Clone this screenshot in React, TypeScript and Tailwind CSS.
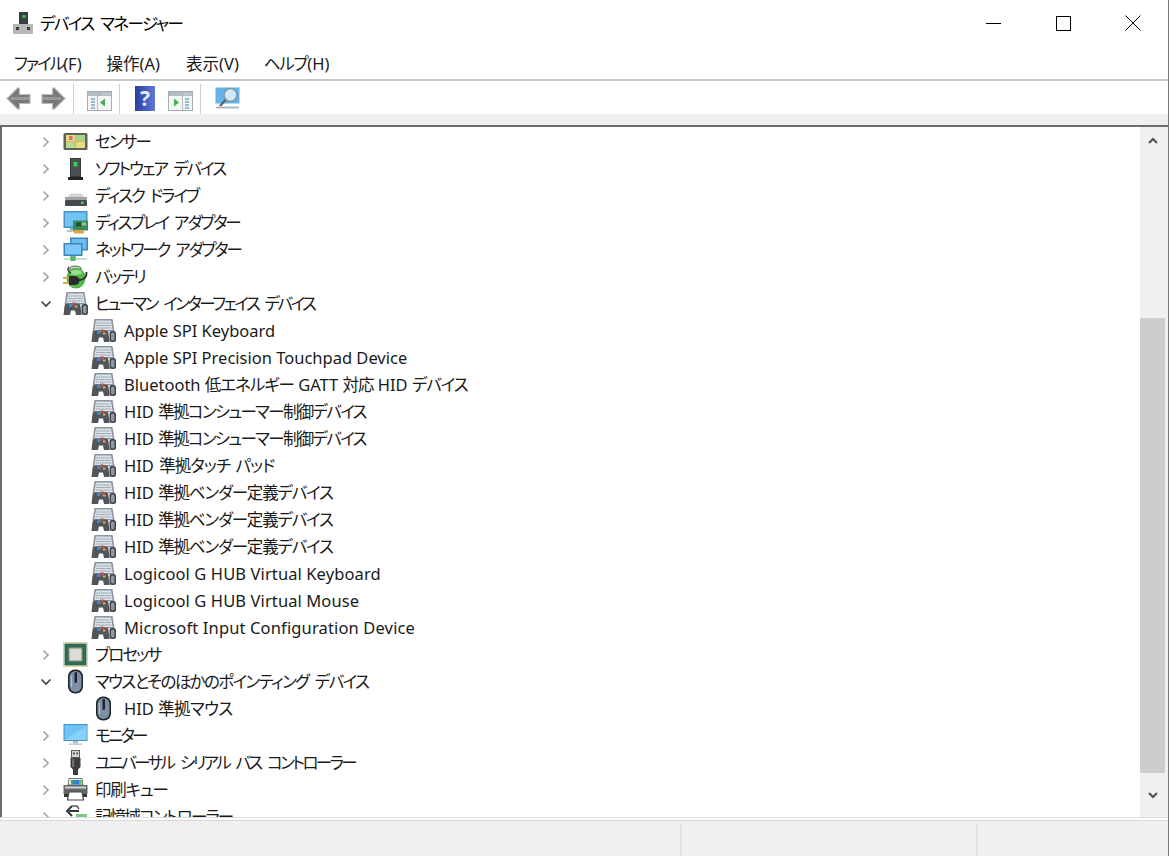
import React from 'react';

const font = { fontFamily: '"Noto Sans", "Noto Sans CJK JP", sans-serif' };

type IconKind =
  | 'sensor'
  | 'software'
  | 'disk'
  | 'display'
  | 'network'
  | 'battery'
  | 'hid'
  | 'cpu'
  | 'mouse'
  | 'monitor'
  | 'usb'
  | 'printer'
  | 'storage';

interface Row {
  label: string;
  icon: IconKind;
  depth: number;
  open?: boolean;
  // letter spacing for the Japanese runs / for the whole label
  kana?: string;
  latin?: string;
}

const rows: Row[] = [
  { label: 'センサー', icon: 'sensor', depth: 0, kana: 'tracking-[-1.75px]' },
  { label: 'ソフトウェア デバイス', icon: 'software', depth: 0, latin: '[word-spacing:2px]', kana: 'tracking-[-2px]' },
  { label: 'ディスク ドライブ', icon: 'disk', depth: 0, latin: '[word-spacing:2px]', kana: 'tracking-[-2px]' },
  { label: 'ディスプレイ アダプター', icon: 'display', depth: 0, latin: '[word-spacing:2px]', kana: 'tracking-[-2.2px]' },
  { label: 'ネットワーク アダプター', icon: 'network', depth: 0, latin: '[word-spacing:2px]', kana: 'tracking-[-2.2px]' },
  { label: 'バッテリ', icon: 'battery', depth: 0, kana: 'tracking-[-1.75px]' },
  { label: 'ヒューマン インターフェイス デバイス', icon: 'hid', depth: 0, open: true, latin: '[word-spacing:2px]', kana: 'tracking-[-2.5px]' },
  { label: 'Apple SPI Keyboard', icon: 'hid', depth: 1 },
  { label: 'Apple SPI Precision Touchpad Device', icon: 'hid', depth: 1 },
  { label: 'Bluetooth 低エネルギー GATT 対応 HID デバイス', icon: 'hid', depth: 1, kana: 'tracking-[-1.05px]' },
  { label: 'HID 準拠コンシューマー制御デバイス', icon: 'hid', depth: 1, kana: 'tracking-[-1.67px]' },
  { label: 'HID 準拠コンシューマー制御デバイス', icon: 'hid', depth: 1, kana: 'tracking-[-1.67px]' },
  { label: 'HID 準拠タッチ パッド', icon: 'hid', depth: 1, latin: '[word-spacing:1px]', kana: 'tracking-[-0.9px]' },
  { label: 'HID 準拠ベンダー定義デバイス', icon: 'hid', depth: 1, kana: 'tracking-[-1.18px]' },
  { label: 'HID 準拠ベンダー定義デバイス', icon: 'hid', depth: 1, kana: 'tracking-[-1.18px]' },
  { label: 'HID 準拠ベンダー定義デバイス', icon: 'hid', depth: 1, kana: 'tracking-[-1.18px]' },
  { label: 'Logicool G HUB Virtual Keyboard', icon: 'hid', depth: 1, latin: 'tracking-[0.1px]' },
  { label: 'Logicool G HUB Virtual Mouse', icon: 'hid', depth: 1, latin: 'tracking-[0.1px]' },
  { label: 'Microsoft Input Configuration Device', icon: 'hid', depth: 1, latin: 'tracking-[0.14px]' },
  { label: 'プロセッサ', icon: 'cpu', depth: 0, kana: 'tracking-[-2px]' },
  { label: 'マウスとそのほかのポインティング デバイス', icon: 'mouse', depth: 0, open: true, latin: '[word-spacing:2px]', kana: 'tracking-[-1.6px]' },
  { label: 'HID 準拠マウス', icon: 'mouse', depth: 1, kana: 'tracking-[-0.6px]' },
  { label: 'モニター', icon: 'monitor', depth: 0, kana: 'tracking-[-2.7px]' },
  { label: 'ユニバーサル シリアル バス コントローラー', icon: 'usb', depth: 0, latin: '[word-spacing:2px]', kana: 'tracking-[-2.55px]' },
  { label: '印刷キュー', icon: 'printer', depth: 0, kana: 'tracking-[-1.2px]' },
  { label: '記憶域コントローラー', icon: 'storage', depth: 0, kana: 'tracking-[-1.8px]' },
];

const DeviceIcon: React.FC<{ kind: IconKind }> = ({ kind }) => {
  const body = () => {
    switch (kind) {
      case 'sensor':
        return (
          <>
            <rect x="0.5" y="4" width="24" height="17" rx="1.5" fill="#5f605a" />
            <rect x="3" y="6" width="19" height="13" fill="#e3df86" />
            <rect x="13" y="6" width="9" height="6" fill="#a6d58e" />
            <rect x="3" y="13" width="9" height="6" fill="#b6db90" />
            <path d="M3 12.5h19M12.5 6v13" stroke="#efa95a" strokeWidth="1.2" />
            <rect x="6" y="7" width="3.5" height="4" fill="#e7686b" />
          </>
        );
      case 'software':
        return (
          <>
            <path d="M7 2h11v19H7z" fill="#34383b" />
            <rect x="8" y="3" width="9" height="17" fill="#4a5054" />
            <rect x="10.5" y="6" width="4" height="4.5" fill="#2fd44b" />
            <path d="M5 21h15v3H5z" fill="#232527" />
          </>
        );
      case 'disk':
        return (
          <>
            <path d="M5 14c1-2.5 2.5-3.5 5-3.5h6c2.5 0 4 1 5 3.5z" fill="#d2d5d8" />
            <rect x="2" y="14" width="22" height="3" fill="#a2a5a8" />
            <rect x="2" y="17" width="22" height="6" rx="1" fill="#45494c" />
            <rect x="18" y="18.5" width="2.5" height="2.5" fill="#3ad64e" />
          </>
        );
      case 'display':
        return (
          <>
            <rect x="0.5" y="1" width="24" height="17" fill="#4b8fc5" />
            <rect x="2" y="2.5" width="21" height="14" fill="#6ec4f3" />
            <path d="M7 18h10v2H7z" fill="#93a9b8" />
            <path d="M4 20h13v2H4z" fill="#b9c6cf" />
            <rect x="10" y="10.5" width="15" height="10" fill="#3b8b5d" />
            <rect x="13" y="12.5" width="5" height="4" fill="#1f4d36" />
            <rect x="19" y="12.5" width="4" height="3" fill="#99c894" />
            <rect x="11" y="20.5" width="10" height="3" fill="#e4a62e" />
          </>
        );
      case 'network':
        return (
          <>
            <rect x="7" y="0.5" width="18" height="13" fill="#3f83bd" />
            <rect x="8.5" y="2" width="15" height="10" fill="#6cbdf0" />
            <rect x="0.5" y="6" width="19" height="13" fill="#3f83bd" />
            <rect x="2" y="7.5" width="16" height="10" fill="#7bcaf6" />
            <path d="M7 19h6v2H7z" fill="#8fa8b4" />
            <rect x="1" y="21" width="23" height="2" fill="#bfe0c2" />
            <rect x="7.5" y="20" width="5" height="4" fill="#4fbb5c" />
          </>
        );
      case 'battery':
        return (
          <>
            <path d="M7 4c0-2 9-3 11 0v5H7z" fill="#e2e4de" stroke="#4f5150" strokeWidth="1" />
            <ellipse cx="13" cy="14" rx="9.5" ry="10.5" fill="#55b64a" />
            <ellipse cx="13" cy="8.5" rx="6" ry="2.4" fill="#9be08a" />
            <path d="M0 14h7" stroke="#c9a93e" strokeWidth="1.8" />
            <path d="M0 19h7" stroke="#c9a93e" strokeWidth="1.8" />
            <path d="M6 12h5c3.5 0 5.5 1.500 5.5 4.500S14.500 21 11 21H6z" fill="#2a2c2d" />
            <path d="M16 16c5 0 8-3 7.500-8" stroke="#2a2c2d" strokeWidth="1.8" fill="none" />
            <path d="M6 3C4 5 5 8 8 9" stroke="#2a2c2d" strokeWidth="1.4" fill="none" />
          </>
        );
      case 'hid':
        return (
          <>
            <path d="M3.500 1h18l2 12.500h-22z" fill="#8a96a2" />
            <path d="M5 2.500h15l1.700 9.500H3.300z" fill="#dbe2e8" />
            <path d="M5.500 5h14M5 7.500h15M4.500 10h16" stroke="#8f9ba7" strokeWidth="1.2" strokeDasharray="1.6 0.6" />
            <path d="M0.500 24l1-9c.5-2 1.500-2.500 4.500-2.500h8c2 0 3 .5 3.500 2.500l1 9H13l-1-4.500H8L7 24z" fill="#50565b" />
            <rect x="6" y="12.500" width="3.500" height="3.500" fill="#3a86da" />
            <rect x="9.500" y="11.500" width="3" height="3" fill="#d3492d" />
            <rect x="12" y="14.500" width="2.500" height="2" fill="#e2b23a" />
            <rect x="18.500" y="13" width="6.500" height="11" rx="2.500" fill="#3f4448" />
            <rect x="20" y="14.500" width="3.500" height="8" rx="1.500" fill="#8f99a2" />
          </>
        );
      case 'cpu':
        return (
          <>
            <rect x="0.5" y="0.5" width="24" height="24" fill="none" stroke="#cfa63a" strokeWidth="1" strokeDasharray="1 1" />
            <rect x="1.5" y="1.5" width="22" height="22" fill="#2f6b4c" />
            <rect x="6" y="6" width="13" height="13" fill="#dcdcd9" stroke="#8a8f8b" strokeWidth="1.2" />
          </>
        );
      case 'mouse':
        return (
          <>
            <rect x="5" y="0.5" width="15" height="24" rx="7" fill="#1e2226" />
            <rect x="6.5" y="2" width="12" height="21" rx="6" fill="#7d90a7" />
            <path d="M8.500 7v11" stroke="#b3c0ce" strokeWidth="1.2" />
            <rect x="11.5" y="3" width="2.5" height="11" rx="1.2" fill="#20242a" />
          </>
        );
      case 'monitor':
        return (
          <>
            <rect x="0.5" y="1" width="24" height="17" fill="#4c8dc2" />
            <rect x="1.5" y="2" width="22" height="15" fill="#6cc4f6" />
            <path d="M1.500 17L23.500 3v14z" fill="#86d2f9" />
            <path d="M10 18h5v2.500h-5z" fill="#a9bdca" />
            <path d="M6 20.500h13v1.500H6z" fill="#c3d0d9" />
          </>
        );
      case 'usb':
        return (
          <>
            <rect x="8.5" y="0.5" width="8" height="7" fill="#d0d3d5" stroke="#5e6163" strokeWidth="1" />
            <rect x="10" y="2.5" width="1.8" height="1.8" fill="#4a4d4f" />
            <rect x="13.3" y="2.5" width="1.8" height="1.8" fill="#4a4d4f" />
            <path d="M7.500 8h10v9l-2.500 2.500V25h-5v-5.500L7.500 17z" fill="#3c3f41" />
            <rect x="9" y="9" width="2.2" height="8" fill="#6c7072" />
          </>
        );
      case 'printer':
        return (
          <>
            <path d="M6 1.500h13l1 6.500H5z" fill="#e8ecec" stroke="#55595c" strokeWidth="0.8" />
            <path d="M8 3h3v4.500H8z" fill="#2fae4b" />
            <path d="M11 3h5v4.500h-5z" fill="#2f7fdb" />
            <path d="M16 3h2.500v4.500H16z" fill="#4cc15d" />
            <rect x="0.5" y="8" width="24" height="9" fill="#63676a" />
            <rect x="2" y="9.5" width="21" height="2" fill="#d2d5d7" />
            <path d="M6 15h13l1.500 8h-16z" fill="#fff" stroke="#45484b" strokeWidth="1.2" />
            <rect x="1" y="17" width="4" height="3" fill="#35383a" />
            <rect x="20" y="17" width="4" height="3" fill="#35383a" />
          </>
        );
      case 'storage':
        return (
          <>
            <path d="M9 2l-5 5 5 5M6 7h10" fill="none" stroke="#33373a" strokeWidth="2" />
            <path d="M9 2h5l2 3" fill="none" stroke="#5a5e61" strokeWidth="1.5" />
            <rect x="13" y="10" width="11" height="5" fill="#7cc48a" />
            <rect x="3" y="14" width="21" height="7" fill="#6b6f72" />
          </>
        );
    }
  };
  return (
    <svg width="25" height="25" viewBox="0 0 25 25" className="shrink-0">
      {body()}
    </svg>
  );
};

// Japanese runs get their own spacing, the Latin runs stay as they are
const Label: React.FC<{ row: Row }> = ({ row }) => (
  <span
    className={`whitespace-nowrap pt-[2px] text-[16.5px] text-[#1a1a1a] ${row.latin ?? ''} ${row.depth === 1 ? 'ml-[8px]' : 'ml-[7px]'}`}
  >
    {row.label.split(/([\x20-\x7e]+)/).map((run, i) =>
      /^[\x20-\x7e]*$/.test(run) ? run : (
        <span key={i} className={row.kana}>
          {run}
        </span>
      ),
    )}
  </span>
);

const TreeRow: React.FC<{ row: Row }> = ({ row }) => (
  <div className={`flex h-[27px] shrink-0 items-center ${row.depth === 1 ? 'pl-[89px]' : 'pl-[38px]'}`}>
    {row.depth === 0 && (
      <svg width="12" height="12" viewBox="0 0 12 12" className="mr-[11px] shrink-0">
        {row.open ? (
          <path d="M1.5 3.5L6 8l4.500-4.500" fill="none" stroke="#404040" strokeWidth="1.7" />
        ) : (
          <path d="M3.5 1.5L8 6l-4.500 4.500" fill="none" stroke="#a6a6a6" strokeWidth="1.7" />
        )}
      </svg>
    )}
    <DeviceIcon kind={row.icon} />
    <Label row={row} />
  </div>
);

const Separator = () => <div className="h-[30px] w-px shrink-0 bg-[#d0d0d0]" />;

const Arrow: React.FC<{ flip?: boolean }> = ({ flip }) => (
  <svg width="25" height="25" viewBox="0 0 25 25" className={`shrink-0 ${flip ? '-scale-x-100' : ''}`}>
    <path d="M1 12.5L11.500 2h2v6.500H24v9H13.500V23h-2z" fill="#787a7a" stroke="#bcbdbd" strokeWidth="1.2" />
    <path d="M5 12.5h18" stroke="#979898" strokeWidth="3" />
  </svg>
);

const PaneIcon: React.FC<{ dir: 'left' | 'right' }> = ({ dir }) => (
  <svg width="25" height="25" viewBox="0 0 25 25" className="shrink-0">
    <rect x="0.5" y="5.5" width="24" height="19" fill="#f3f5f6" stroke="#a6adb3" />
    <rect x="1" y="6" width="23" height="4" fill="#b4bcc3" />
    <path d="M16 8h1.500M19 8h1.500M22 8h1" stroke="#f0f1f2" strokeWidth="1.2" />
    {dir === 'left' ? (
      <>
        <path d="M4 13h4M4 16h4M4 19h4M4 22h4" stroke="#7ea3c4" strokeWidth="1.5" />
        <path d="M10.5 10v14" stroke="#b5bcc2" />
        <path d="M18 12.500v8l-5-4z" fill="#3fb14d" />
      </>
    ) : (
      <>
        <path d="M17 13h4M17 16h4M17 19h4M17 22h4" stroke="#7ea3c4" strokeWidth="1.5" />
        <path d="M14.500 10v14" stroke="#b5bcc2" />
        <path d="M6 12.500v8l5-4z" fill="#3fb14d" />
      </>
    )}
  </svg>
);

export default function App() {
  return (
    <div className="flex h-[856px] w-[1169px] flex-col overflow-hidden border-r border-[#7a7a7a] bg-white [font-feature-settings:'palt']" style={font}>
      {/* Title bar */}
      <div className="flex h-[46px] shrink-0 items-center">
        <svg width="22" height="24" viewBox="0 0 22 24" className="ml-[12px] shrink-0">
          <rect x="7" y="1" width="9" height="13" fill="#3a3e41" />
          <rect x="10.5" y="4" width="3" height="3" fill="#35c24f" />
          <rect x="1" y="13" width="20" height="10" rx="1" fill="#b4b6b8" />
          <rect x="4" y="16" width="3" height="3" fill="#3a3e41" />
          <rect x="15" y="16" width="3" height="3" fill="#3a3e41" />
        </svg>
        <span className="ml-[6px] pt-[2px] text-[16.5px] tracking-[-1.6px] text-black [word-spacing:4px]">デバイス マネージャー</span>
        <div className="ml-auto flex h-full items-center">
          <div className="flex w-[70px] justify-center">
            <div className="h-px w-[15px] bg-black" />
          </div>
          <div className="flex w-[70px] justify-center">
            <div className="h-[15px] w-[15px] border border-black" />
          </div>
          <div className="flex w-[70px] justify-center">
            <svg width="16" height="16" viewBox="0 0 16 16">
              <path d="M.5.5l15 15M15.5.5l-15 15" stroke="#000" strokeWidth="1" />
            </svg>
          </div>
        </div>
      </div>

      {/* Menu */}
      <div className="flex h-[35px] shrink-0 items-center border-b-2 border-[#c8c8cc] pt-[3px] pl-[14px] text-[16.5px] text-[#1a1a1a]">
        <span>
          <span className="tracking-[-2px]">ファイル</span>(F)
        </span>
        <span className="ml-[25px]">操作(A)</span>
        <span className="ml-[26px]">表示(V)</span>
        <span className="ml-[25px]">
          <span className="tracking-[-1.3px]">ヘルプ</span>(H)
        </span>
      </div>

      {/* Toolbar */}
      <div className="flex h-[33px] shrink-0 items-center pt-[2px] pl-[6px]">
        <Arrow />
        <div className="ml-[10px]">
          <Arrow flip />
        </div>
        <div className="ml-[7px]">
          <Separator />
        </div>
        <div className="ml-[13px]">
          <PaneIcon dir="left" />
        </div>
        <div className="ml-[7px]">
          <Separator />
        </div>
        <div className="ml-[15px] flex h-[25px] w-[20px] shrink-0 items-center justify-center bg-gradient-to-r from-[#2a3f9f] to-[#5f78d4] text-[21px] font-bold text-[#e3e8fa]">
          ?
        </div>
        <div className="ml-[13px]">
          <PaneIcon dir="right" />
        </div>
        <div className="ml-[7px]">
          <Separator />
        </div>
        <div className="ml-[14px]">
          <svg width="25" height="25" viewBox="0 0 25 25" className="shrink-0">
            <rect x="0.5" y="1.5" width="24" height="16" fill="#66b4e6" />
            <circle cx="15.5" cy="9" r="6.500" fill="#cfe9f8" stroke="#7d97a8" strokeWidth="1.5" />
            <path d="M10.500 14L5 20" stroke="#59636b" strokeWidth="2.2" />
            <path d="M1 21.500h23" stroke="#a5b5c0" strokeWidth="1.8" />
          </svg>
        </div>
      </div>

      {/* Gap above tree */}
      <div className="h-[11px] shrink-0 bg-[#f0f0f0]" />

      {/* Tree + scrollbar */}
      <div className="flex h-[692px] shrink-0 border-t-2 border-l-2 border-[#6d6d6d] bg-white">
        <div className="flex min-w-0 flex-1 flex-col overflow-hidden pt-px">
          {rows.map((row, i) => (
            <TreeRow key={i} row={row} />
          ))}
        </div>
        <div className="flex w-[25px] shrink-0 flex-col bg-[#f0f0f0]">
          <div className="flex h-[28px] shrink-0 items-center justify-center">
            <svg width="10" height="8" viewBox="0 0 10 8">
              <path d="M1 6l4-4 4 4" fill="none" stroke="#505050" strokeWidth="2" />
            </svg>
          </div>
          <div className="h-[163px] shrink-0" />
          <div className="h-[455px] shrink-0 bg-[#cdcdcd]" />
          <div className="flex flex-1 items-center justify-center">
            <svg width="10" height="8" viewBox="0 0 10 8">
              <path d="M1 2l4 4 4-4" fill="none" stroke="#505050" strokeWidth="2" />
            </svg>
          </div>
        </div>
        <div className="w-[3px] shrink-0 bg-[#f0f0f0]" />
      </div>

      {/* Status bar */}
      <div className="h-[3px] shrink-0 border-t border-[#e0e0e0] bg-white" />
      <div className="flex min-h-0 flex-1 border-t border-[#d7d7d7] bg-[#f0f0f0] pt-[2px]">
        <div className="w-[682px] border-r-2 border-[#e2e2e2]" />
        <div className="w-[296px] border-r-2 border-[#e2e2e2]" />
      </div>
    </div>
  );
}
